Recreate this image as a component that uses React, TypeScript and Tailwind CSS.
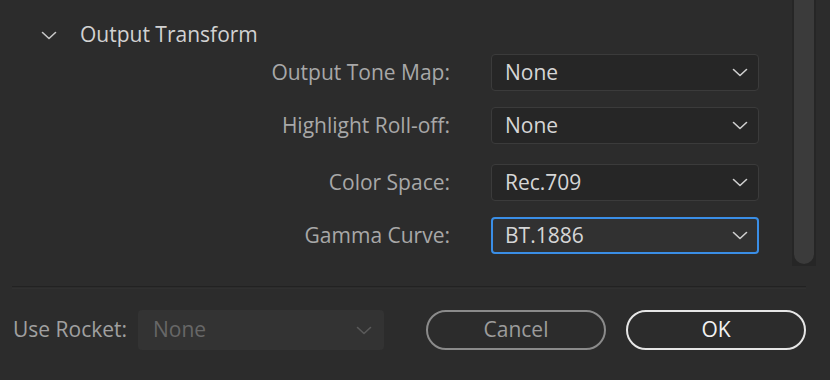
import type { ReactNode } from 'react'

function Chevron({ className = '' }: { className?: string }) {
    return (
        <svg width="16" height="9" viewBox="0 0 16 9" className={className} fill="none">
            <path d="M1.5 1.5 L8 7.5 L14.5 1.5" stroke="currentColor" strokeWidth="1.6" strokeLinecap="round" strokeLinejoin="round" />
        </svg>
    )
}

function Select({ value, focused = false }: { value: string; focused?: boolean }) {
    return (
        <div
            className={`ml-[41px] flex h-[37px] w-[268px] items-center justify-between rounded-[4px] ${focused
                ? 'border-2 border-[#3a8ee6] bg-[#313131] pl-[12px] pr-[9px]'
                : 'border border-[#3b3b3b] bg-[#262626] pl-[13px] pr-[10px]'
                }`}
        >
            <span className="text-[21px] text-[#d6d6d6]">{value}</span>
            <Chevron className="text-[#cfcfcf]" />
        </div>
    )
}

function Row({ label, children, className = '' }: { label: string; children: ReactNode; className?: string }) {
    return (
        <div className={`flex items-center ${className}`}>
            <div className="w-[450px] text-right text-[21px] text-[#a8a8a8]">{label}</div>
            {children}
        </div>
    )
}

export default function App() {
    return (
        <main
            className="flex h-[380px] w-[830px] flex-col overflow-hidden bg-[#2c2c2c]"
            style={{ fontFamily: '"Open Sans", "Liberation Sans", sans-serif' }}
        >
            {/* Panel + scrollbar */}
            <section className="flex h-[286px] pr-[14px]">
                <div className="flex-1">
                    <div className="mt-[23px] flex h-[24px] items-center">
                        <Chevron className="ml-[41px] text-[#c8c8c8]" />
                        <span className="ml-[23px] text-[21px] text-[#d2d2d2]">Output Transform</span>
                    </div>
                    <Row label="Output Tone Map:" className="mt-[7px]">
                        <Select value="None" />
                    </Row>
                    <Row label="Highlight Roll-off:" className="mt-[16px]">
                        <Select value="None" />
                    </Row>
                    <Row label="Color Space:" className="mt-[20px]">
                        <Select value="Rec.709" />
                    </Row>
                    <Row label="Gamma Curve:" className="mt-[16px]">
                        <Select value="BT.1886" focused />
                    </Row>
                </div>
                <div className="flex h-[266px] w-[24px] bg-[#262626] px-[2px] pb-[2px]">
                    <div className="h-full w-full rounded-b-full bg-[#3b3b3b]" />
                </div>
            </section>

            {/* Separator */}
            <div className="ml-[12px] h-[3px] w-[794px] border-t border-b border-[#222222] border-b-[#303030]" />

            {/* Footer */}
            <footer className="mt-[21px] flex h-[40px] items-center">
                <span className="ml-[13px] w-[125px] text-[21px] text-[#a0a0a0]">Use Rocket:</span>
                <div className="flex h-[40px] w-[246px] items-center justify-between rounded-[4px] bg-[#333333] pl-[15px] pr-[12px]">
                    <span className="text-[21px] text-[#676767]">None</span>
                    <Chevron className="text-[#5a5a5a]" />
                </div>
                <button className="ml-[42px] flex h-[40px] w-[180px] items-center justify-center rounded-full border-2 border-[#8b8b8b] text-[21px] text-[#9c9c9c]">
                    Cancel
                </button>
                <button className="ml-[20px] flex h-[40px] w-[180px] items-center justify-center rounded-full border-2 border-[#e6e6e6] text-[21px] text-[#f2f2f2]">
                    OK
                </button>
            </footer>
        </main>
    )
}
